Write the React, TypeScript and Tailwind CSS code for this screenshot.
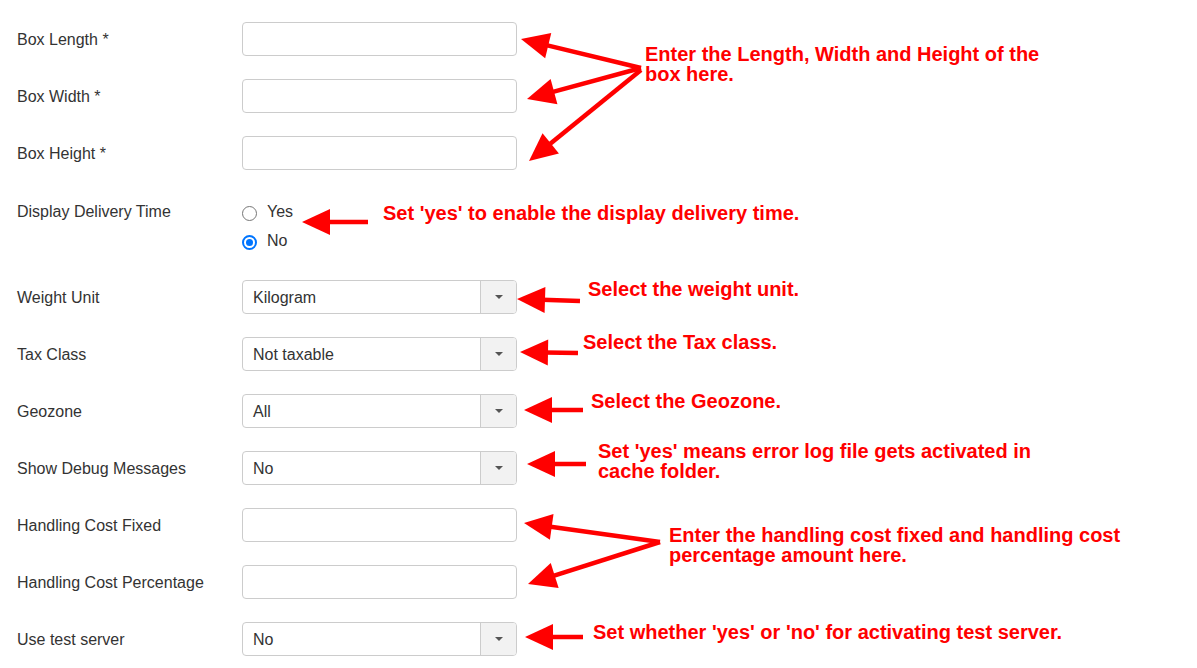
const labelCls = "w-[225px] shrink-0";

const TextRow = ({ label }: { label: string }) => (
  <div className="flex items-center h-[34px] mb-[23px]">
    <div className={`${labelCls} pt-[2px]`}>{label}</div>
    <div className="w-[275px] h-[34px] border border-[#ccc] rounded-[4px] bg-white"></div>
  </div>
);

const SelectRow = ({ label, value }: { label: string; value: string }) => (
  <div className="flex items-center h-[34px] mb-[23px]">
    <div className={`${labelCls} pt-[2px]`}>{label}</div>
    <div className="w-[275px] h-[34px] border border-[#ccc] rounded-[4px] bg-white flex overflow-hidden">
      <div className="flex-1 pl-[10px] pt-[2px] flex items-center text-[#333]">{value}</div>
      <div className="w-[36px] border-l border-[#ccc] bg-[#f2f2f2] flex items-center justify-center">
        <span className="block w-0 h-0 border-l-[4px] border-r-[4px] border-t-[4px] border-l-transparent border-r-transparent border-t-[#555]"></span>
      </div>
    </div>
  </div>
);

type Pt = { x1: number; y1: number; x2: number; y2: number };

const Arrow = ({ x1, y1, x2, y2 }: Pt) => {
  const dx = x2 - x1;
  const dy = y2 - y1;
  const len = Math.sqrt(dx * dx + dy * dy);
  const ux = dx / len;
  const uy = dy / len;
  const L = 28;
  const W = 13;
  const bx = x2 - ux * L;
  const by = y2 - uy * L;
  const px = -uy;
  const py = ux;
  const pts = `${x2},${y2} ${bx + px * W},${by + py * W} ${bx - px * W},${by - py * W}`;
  return (
    <g>
      <line x1={x1} y1={y1} x2={bx + ux * 3} y2={by + uy * 3} stroke="#ff0000" strokeWidth="4.5" />
      <polygon points={pts} fill="#ff0000" />
    </g>
  );
};

const arrows: Pt[] = [
  { x1: 641, y1: 68, x2: 521, y2: 39 },
  { x1: 641, y1: 68, x2: 527, y2: 99 },
  { x1: 641, y1: 70, x2: 529, y2: 161 },
  { x1: 368, y1: 222, x2: 302, y2: 222 },
  { x1: 580, y1: 301, x2: 517, y2: 299 },
  { x1: 578, y1: 353, x2: 520, y2: 352 },
  { x1: 583, y1: 410, x2: 524, y2: 410 },
  { x1: 586, y1: 464, x2: 527, y2: 464 },
  { x1: 660, y1: 542, x2: 524, y2: 523 },
  { x1: 660, y1: 542, x2: 528, y2: 584 },
  { x1: 583, y1: 637, x2: 525, y2: 637 },
];

const Note = ({ className, children }: { className: string; children: React.ReactNode }) => (
  <div className={`absolute whitespace-nowrap text-[20px] leading-[20px] font-bold text-[#ff0000] ${className}`}>
    {children}
  </div>
);

export default function App() {
  return (
    <div className="relative w-[1197px] h-[668px] bg-white overflow-hidden font-['Liberation_Sans',Arial,sans-serif] text-[16px] leading-[20px] text-[#333]">
      <div className="pt-[22px] pl-[17px]">
        <TextRow label="Box Length *" />
        <TextRow label="Box Width *" />
        <TextRow label="Box Height *" />

        <div className="flex h-[64px] mb-[23px]">
          <div className={`${labelCls} pt-[9px]`}>Display Delivery Time</div>
          <div className="flex flex-col gap-[9px] pt-[9px]">
            <label className="flex items-center h-[20px]">
              <span className="w-[15px] h-[15px] rounded-full border border-[#767676] bg-white mt-[3px]"></span>
              <span className="ml-[10px]">Yes</span>
            </label>
            <label className="flex items-center h-[20px]">
              <span className="w-[15px] h-[15px] rounded-full border-2 border-[#0075ff] bg-white mt-[3px] flex items-center justify-center">
                <span className="w-[7px] h-[7px] rounded-full bg-[#0075ff]"></span>
              </span>
              <span className="ml-[10px]">No</span>
            </label>
          </div>
        </div>

        <SelectRow label="Weight Unit" value="Kilogram" />
        <SelectRow label="Tax Class" value="Not taxable" />
        <SelectRow label="Geozone" value="All" />
        <SelectRow label="Show Debug Messages" value="No" />
        <TextRow label="Handling Cost Fixed" />
        <TextRow label="Handling Cost Percentage" />
        <SelectRow label="Use test server" value="No" />
      </div>

      {/* annotation layer */}
      <svg className="absolute inset-0 pointer-events-none" width="1197" height="668">
        {arrows.map((a, i) => (
          <Arrow key={i} {...a} />
        ))}
      </svg>
      <Note className="left-[645px] top-[44px]">
        Enter the Length, Width and Height of the
        <br />
        box here.
      </Note>
      <Note className="left-[383px] top-[203px]">Set 'yes' to enable the display delivery time.</Note>
      <Note className="left-[588px] top-[279px]">Select the weight unit.</Note>
      <Note className="left-[583px] top-[332px]">Select the Tax class.</Note>
      <Note className="left-[591px] top-[391px]">Select the Geozone.</Note>
      <Note className="left-[598px] top-[441px]">
        Set 'yes' means error log file gets activated in
        <br />
        cache folder.
      </Note>
      <Note className="left-[669px] top-[525px]">
        Enter the handling cost fixed and handling cost
        <br />
        percentage amount here.
      </Note>
      <Note className="left-[593px] top-[622px]">Set whether 'yes' or 'no' for activating test server.</Note>
    </div>
  );
}
